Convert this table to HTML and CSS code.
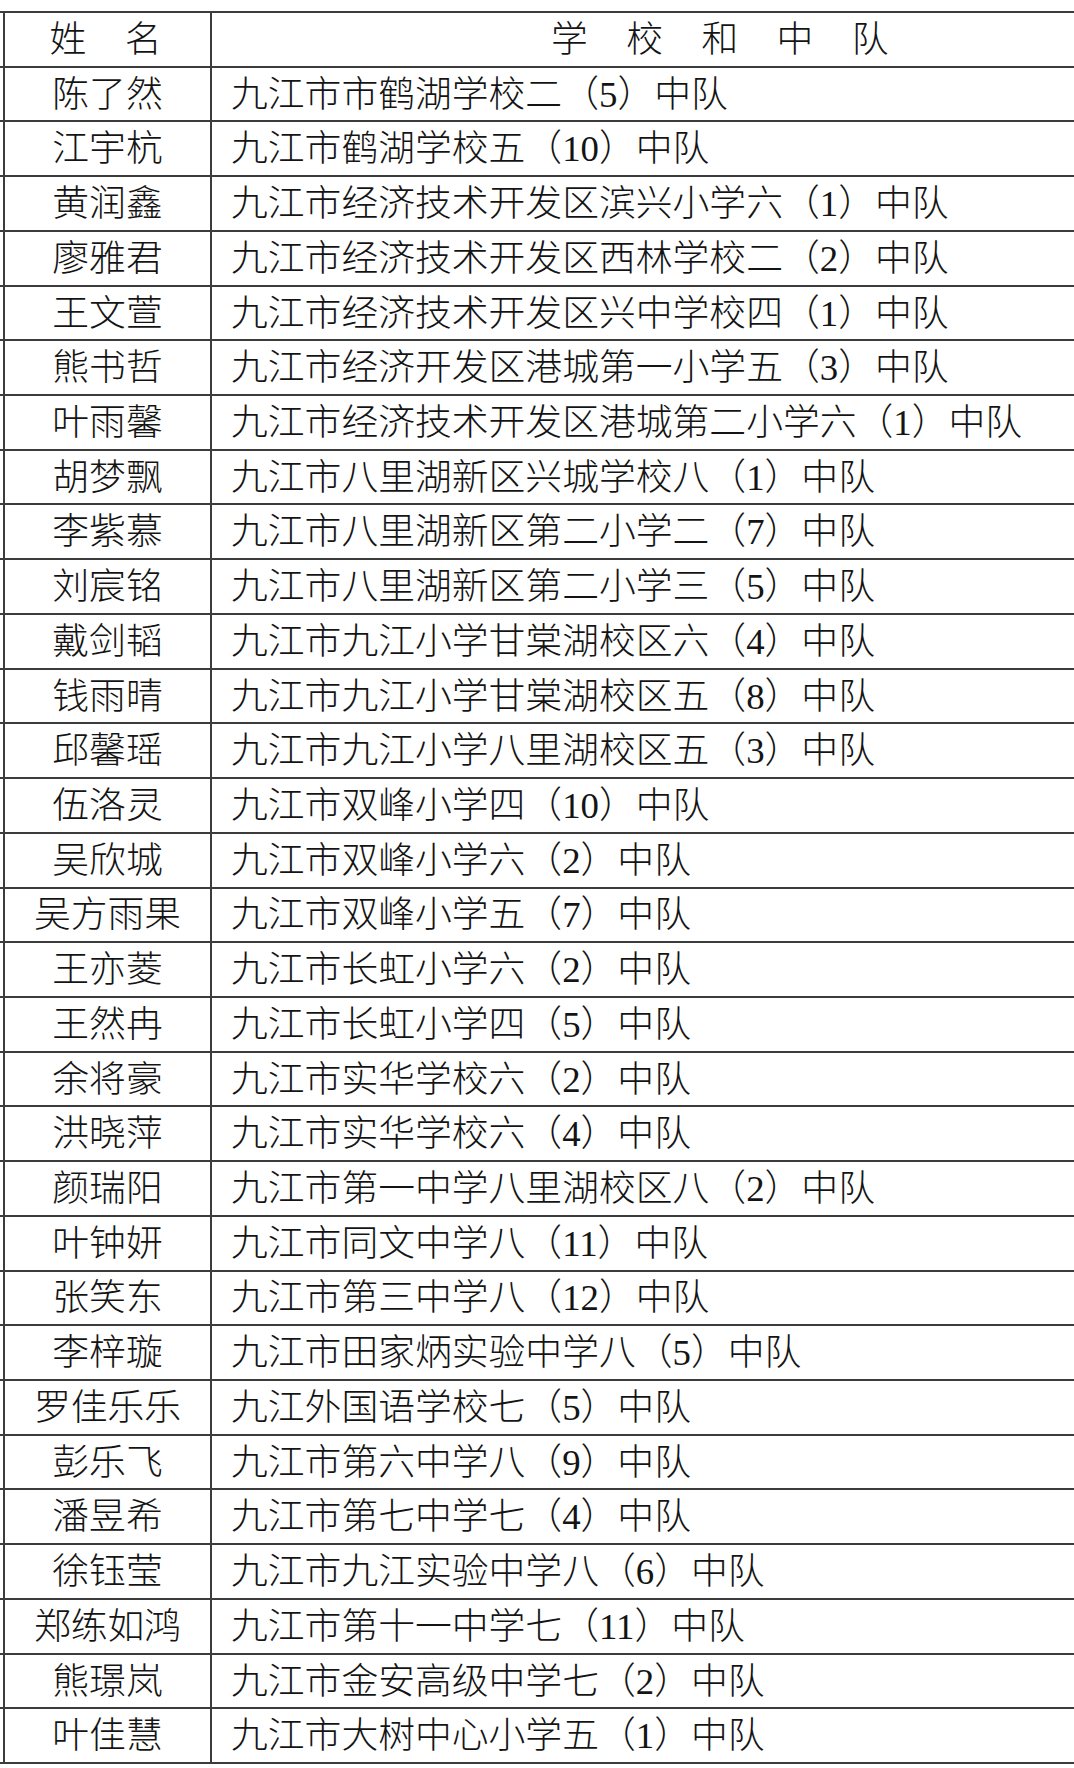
FILE: index.html
```html
<!DOCTYPE html>
<html lang="zh-CN">
<head>
<meta charset="utf-8">
<title>名单</title>
<link rel="stylesheet" href="styles.css">
</head>
<body>
<div class="table">
  <div class="row head">
    <div class="name spaced"><span>姓</span><span>名</span></div>
    <div class="school spaced"><span>学</span><span>校</span><span>和</span><span>中</span><span>队</span></div>
  </div>
  <div class="row"><div class="name">陈了然</div><div class="school">九江市市鹤湖学校二（<span class="num">5</span>）中队</div></div>
  <div class="row"><div class="name">江宇杭</div><div class="school">九江市鹤湖学校五（<span class="num">10</span>）中队</div></div>
  <div class="row"><div class="name">黄润鑫</div><div class="school">九江市经济技术开发区滨兴小学六（<span class="num">1</span>）中队</div></div>
  <div class="row"><div class="name">廖雅君</div><div class="school">九江市经济技术开发区西林学校二（<span class="num">2</span>）中队</div></div>
  <div class="row"><div class="name">王文萱</div><div class="school">九江市经济技术开发区兴中学校四（<span class="num">1</span>）中队</div></div>
  <div class="row"><div class="name">熊书哲</div><div class="school">九江市经济开发区港城第一小学五（<span class="num">3</span>）中队</div></div>
  <div class="row"><div class="name">叶雨馨</div><div class="school">九江市经济技术开发区港城第二小学六（<span class="num">1</span>）中队</div></div>
  <div class="row"><div class="name">胡梦飘</div><div class="school">九江市八里湖新区兴城学校八（<span class="num">1</span>）中队</div></div>
  <div class="row"><div class="name">李紫慕</div><div class="school">九江市八里湖新区第二小学二（<span class="num">7</span>）中队</div></div>
  <div class="row"><div class="name">刘宸铭</div><div class="school">九江市八里湖新区第二小学三（<span class="num">5</span>）中队</div></div>
  <div class="row"><div class="name">戴剑韬</div><div class="school">九江市九江小学甘棠湖校区六（<span class="num">4</span>）中队</div></div>
  <div class="row"><div class="name">钱雨晴</div><div class="school">九江市九江小学甘棠湖校区五（<span class="num">8</span>）中队</div></div>
  <div class="row"><div class="name">邱馨瑶</div><div class="school">九江市九江小学八里湖校区五（<span class="num">3</span>）中队</div></div>
  <div class="row"><div class="name">伍洛灵</div><div class="school">九江市双峰小学四（<span class="num">10</span>）中队</div></div>
  <div class="row"><div class="name">吴欣城</div><div class="school">九江市双峰小学六（<span class="num">2</span>）中队</div></div>
  <div class="row"><div class="name">吴方雨果</div><div class="school">九江市双峰小学五（<span class="num">7</span>）中队</div></div>
  <div class="row"><div class="name">王亦菱</div><div class="school">九江市长虹小学六（<span class="num">2</span>）中队</div></div>
  <div class="row"><div class="name">王然冉</div><div class="school">九江市长虹小学四（<span class="num">5</span>）中队</div></div>
  <div class="row"><div class="name">余将豪</div><div class="school">九江市实华学校六（<span class="num">2</span>）中队</div></div>
  <div class="row"><div class="name">洪晓萍</div><div class="school">九江市实华学校六（<span class="num">4</span>）中队</div></div>
  <div class="row"><div class="name">颜瑞阳</div><div class="school">九江市第一中学八里湖校区八（<span class="num">2</span>）中队</div></div>
  <div class="row"><div class="name">叶钟妍</div><div class="school">九江市同文中学八（<span class="num">11</span>）中队</div></div>
  <div class="row"><div class="name">张笑东</div><div class="school">九江市第三中学八（<span class="num">12</span>）中队</div></div>
  <div class="row"><div class="name">李梓璇</div><div class="school">九江市田家炳实验中学八（<span class="num">5</span>）中队</div></div>
  <div class="row"><div class="name">罗佳乐乐</div><div class="school">九江外国语学校七（<span class="num">5</span>）中队</div></div>
  <div class="row"><div class="name">彭乐飞</div><div class="school">九江市第六中学八（<span class="num">9</span>）中队</div></div>
  <div class="row"><div class="name">潘昱希</div><div class="school">九江市第七中学七（<span class="num">4</span>）中队</div></div>
  <div class="row"><div class="name">徐钰莹</div><div class="school">九江市九江实验中学八（<span class="num">6</span>）中队</div></div>
  <div class="row"><div class="name">郑练如鸿</div><div class="school">九江市第十一中学七（<span class="num">11</span>）中队</div></div>
  <div class="row"><div class="name">熊璟岚</div><div class="school">九江市金安高级中学七（<span class="num">2</span>）中队</div></div>
  <div class="row"><div class="name">叶佳慧</div><div class="school">九江市大树中心小学五（<span class="num">1</span>）中队</div></div>
</div>
</body>
</html>
```

FILE: styles.css
```css
html, body {
  margin: 0;
  padding: 0;
  background: #ffffff;
  overflow: hidden;
}

body {
  font-family: "Liberation Serif", "Noto Sans CJK SC", serif;
  font-size: 36.8px;
  font-weight: 300;
  color: #141414;
}

.table {
  margin-top: 11px;
  width: 100%;
  border-top: 2px solid #3c3c3c;
}

.row {
  display: flex;
  align-items: stretch;
  box-sizing: border-box;
  height: 54.72px;
  border-bottom: 2px solid #3c3c3c;
}

.name {
  box-sizing: border-box;
  margin-left: 3px;
  width: 209px;
  flex: none;
  border-left: 2px solid #3c3c3c;
  border-right: 2px solid #3c3c3c;
  display: flex;
  align-items: center;
  justify-content: center;
  line-height: 1;
  padding-top: 2px;
  white-space: nowrap;
}

.school {
  flex: 1;
  display: flex;
  align-items: center;
  padding-left: 19px;
  line-height: 1;
  padding-top: 2px;
  white-space: nowrap;
}

.num {
  font-family: "Liberation Serif", serif;
}

.spaced {
  gap: 38.4px;
}

.head .name {
  padding-right: 4px;
}

.head .school {
  padding-left: 339px;
}
```
